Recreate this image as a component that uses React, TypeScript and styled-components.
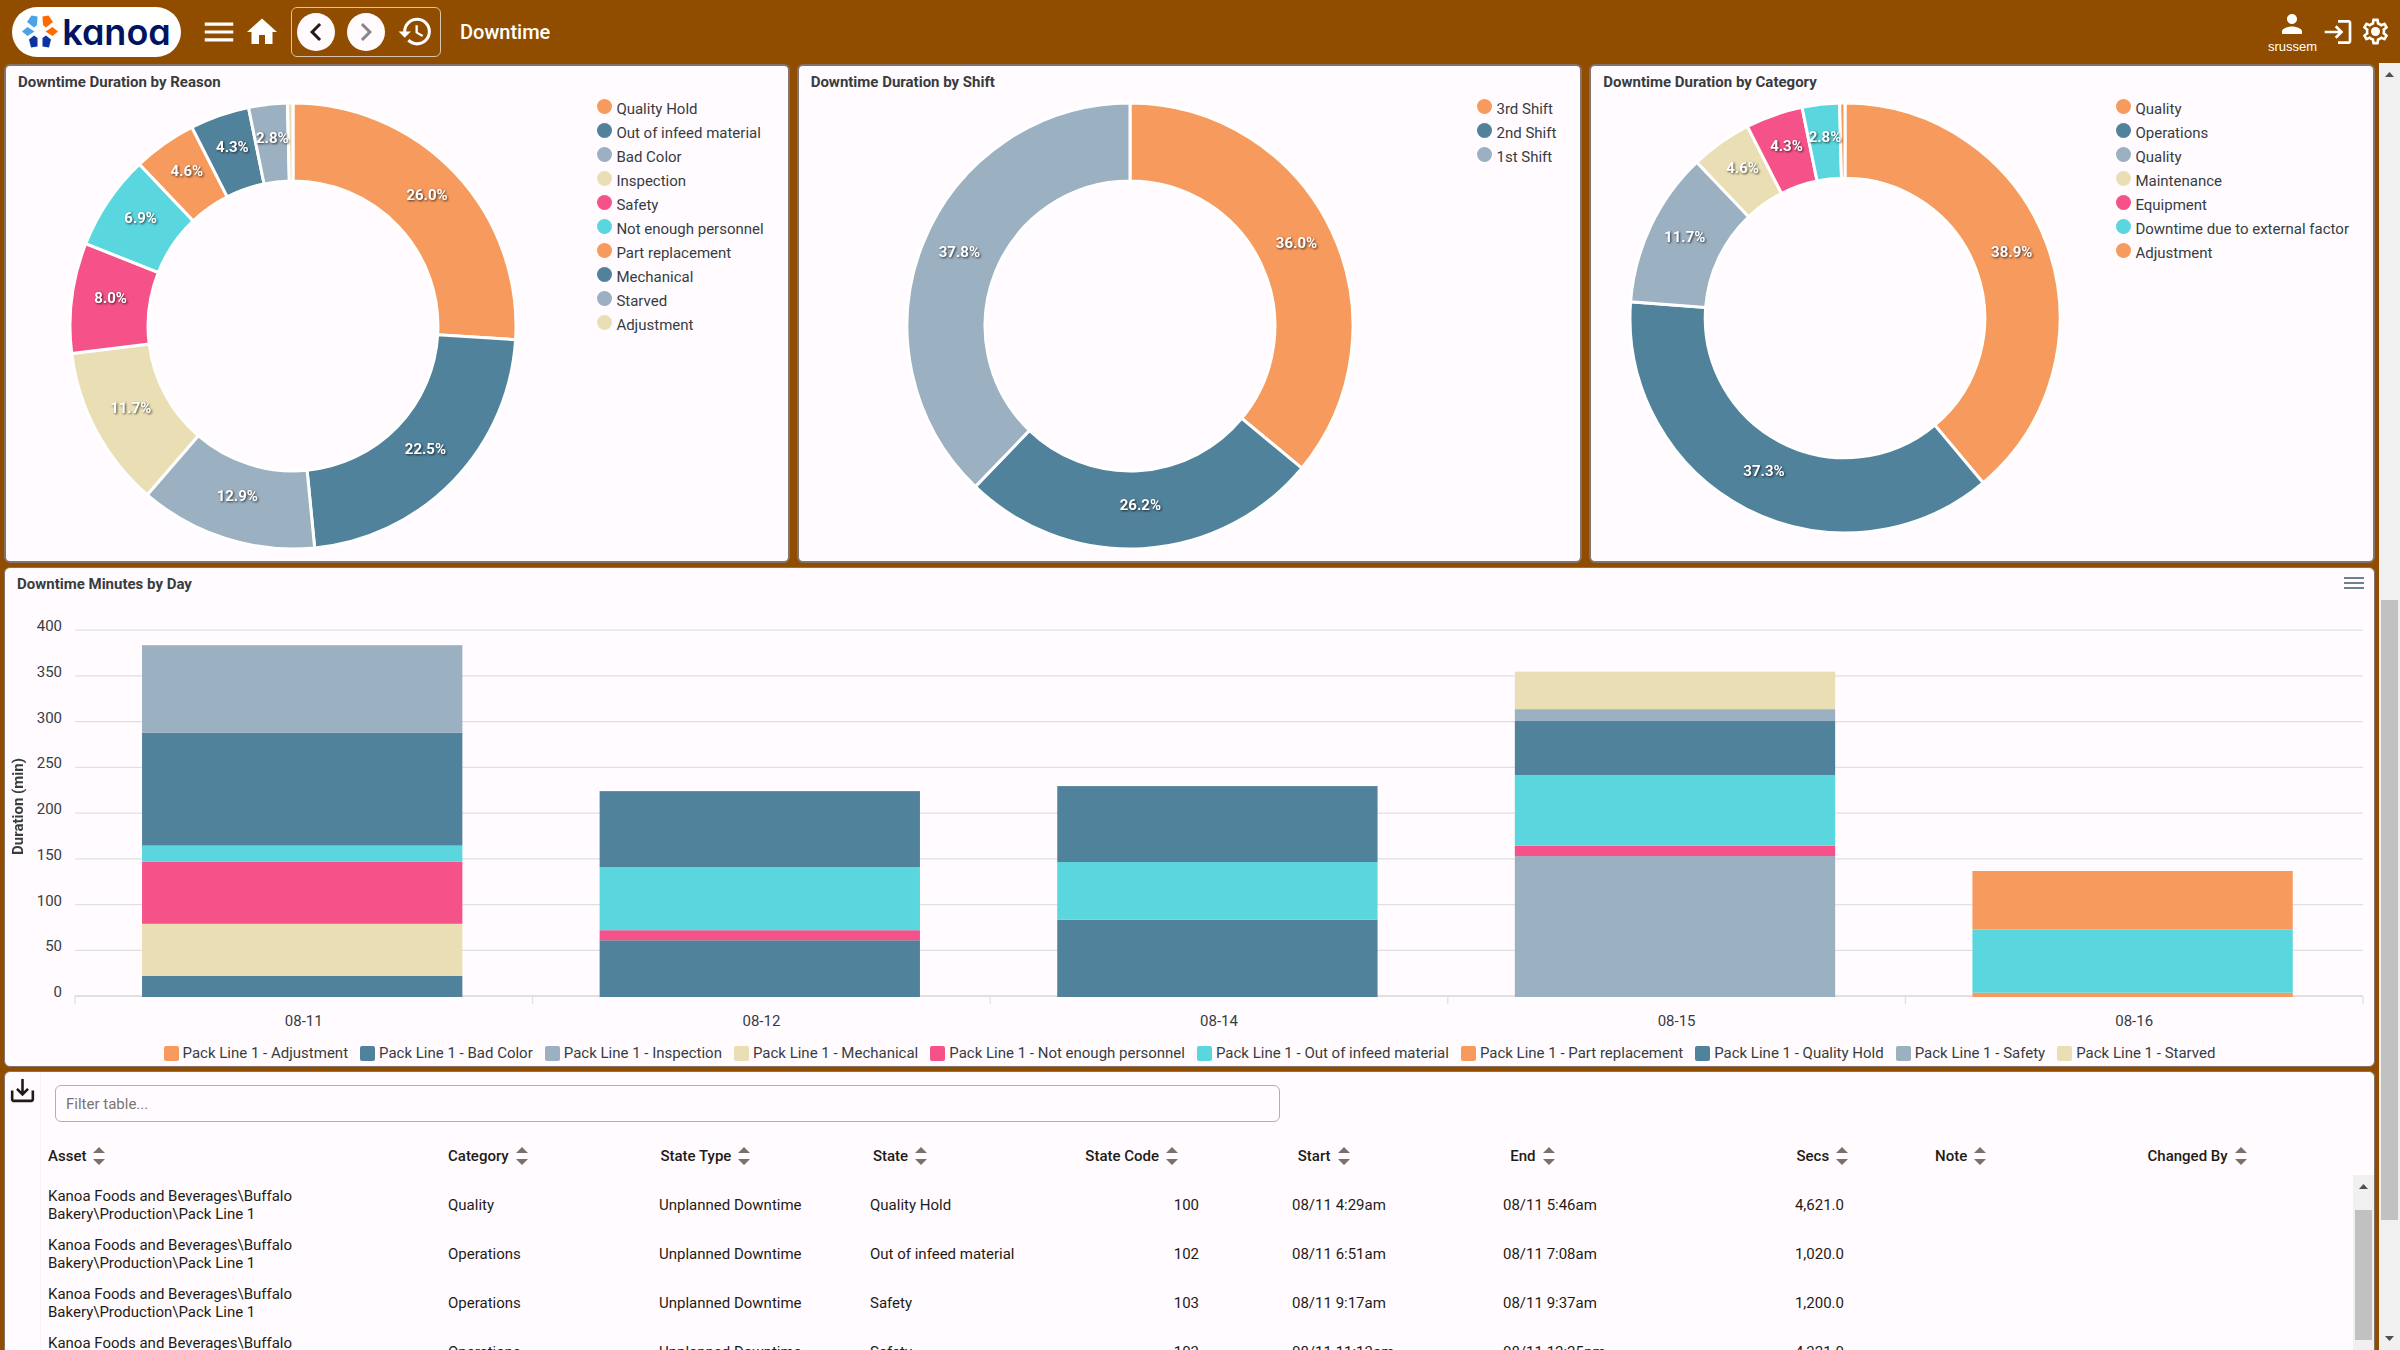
import React from "react";
import styled, { createGlobalStyle } from "styled-components";
import {
  MdChevronLeft,
  MdChevronRight,
  MdHistory,
  MdHome,
  MdLogin,
  MdMenu,
  MdPerson,
  MdSaveAlt,
} from "react-icons/md";

const color = {
  brand: "#904d00",
  surface: "#fffbff",
  outline: "#85736b",
  ink: "#1f1b16",
  chartInk: "#373d3f",
  grid: "#e0e0e0",
  orange: "#f79a5d",
  teal: "#51829b",
  slate: "#9bb0c1",
  sand: "#eadfb4",
  pink: "#f6528a",
  cyan: "#5ad6df",
};

const GlobalStyle = createGlobalStyle`
  *, *::before, *::after { box-sizing: border-box; }
  body {
    margin: 0;
    background: ${color.brand};
    font-family: Roboto, "Liberation Sans", sans-serif;
    font-size: 15px;
    line-height: 20px;
    color: ${color.ink};
  }
  button, input { font: inherit; color: inherit; }
`;

/* ---------- shell ---------- */

const Shell = styled.div`
  display: flex;
  flex-direction: column;
  height: 100vh;
  overflow: hidden;
`;

const TopBar = styled.header`
  flex: none;
  display: flex;
  align-items: center;
  height: 63px;
  padding: 0 9px 0 12px;
  color: #fff;
`;

const Spacer = styled.div`
  flex: 1;
`;

const LogoLink = styled.a`
  display: flex;
  align-items: center;
  justify-content: center;
  gap: 4px;
  width: 169px;
  height: 50px;
  margin-right: 19px;
  border-radius: 25px;
  background: #fff;
  color: #00145f;
  font-family: Inter, sans-serif;
  font-size: 36px;
  font-weight: 600;
  line-height: 48px;
  font-feature-settings: "cv11" 1;
  text-decoration: none;
`;

const IconButton = styled.button<{ $gap?: number }>`
  display: flex;
  flex: none;
  padding: 0;
  margin-right: ${(p) => p.$gap ?? 0}px;
  border: 0;
  background: none;
  cursor: pointer;
`;

const NavGroup = styled.nav`
  display: flex;
  align-items: center;
  gap: 12px;
  height: 50px;
  padding: 0 6px 0 5px;
  border: 1px solid #d8c3b0;
  border-radius: 6px;
`;

const RoundButton = styled(IconButton)<{ $muted?: boolean }>`
  align-items: center;
  justify-content: center;
  width: 38px;
  height: 38px;
  border-radius: 50%;
  background: ${color.surface};
  color: ${(p) => (p.$muted ? "#8a8688" : color.ink)};
`;

const PageTitle = styled.h1`
  margin: 0 0 0 19px;
  font-size: 20px;
  font-weight: 500;
  line-height: 24px;
`;

const User = styled.div`
  display: flex;
  flex-direction: column;
  align-items: center;
  margin-right: 5px;
  font-family: "Liberation Sans", sans-serif;
  font-size: 13px;
  line-height: 16px;
`;

const Body = styled.div`
  display: flex;
  flex: 1;
  min-height: 0;
`;

const Main = styled.main`
  flex: 1;
  min-width: 0;
  display: flex;
  flex-direction: column;
  gap: 4px;
  padding: 1px 4px 4px;
  overflow-y: auto;
  scrollbar-width: none;
`;

/* ---------- scrollbars ---------- */

const Track = styled.div`
  display: flex;
  flex: none;
  flex-direction: column;
  align-items: center;
  width: 21px;
  background: #f0f0f0;
`;

const Arrow = styled.svg`
  flex: none;
  width: 21px;
  height: 24px;
  fill: #505050;
`;

const Stretch = styled.div<{ $grow: number; $thumb?: boolean }>`
  flex: ${(p) => p.$grow} 1 0;
  width: 17px;
  background: ${(p) => (p.$thumb ? "#c1c1c1" : "transparent")};
`;

function Scrollbar({ before, thumb, after }: { before: number; thumb: number; after: number }) {
  return (
    <Track aria-hidden="true">
      <Arrow viewBox="0 0 21 24">
        <path d="M6 14h9l-4.500-5z" />
      </Arrow>
      <Stretch $grow={before} />
      <Stretch $grow={thumb} $thumb />
      <Stretch $grow={after} />
      <Arrow viewBox="0 0 21 24">
        <path d="M6 10h9l-4.500 5z" />
      </Arrow>
    </Track>
  );
}

/* ---------- cards ---------- */

const CardRow = styled.div`
  flex: none;
  display: grid;
  grid-template-columns: repeat(3, minmax(0, 1fr));
  gap: 7px;
`;

const Card = styled.section<{ $border?: number }>`
  flex: none;
  border: ${(p) => p.$border ?? 1}px solid ${color.outline};
  border-radius: 6px;
  background: ${color.surface};
`;

const CardHead = styled.div`
  display: flex;
  align-items: center;
  justify-content: space-between;
  padding: 6px 10px 0 12px;
`;

const CardTitle = styled.h2`
  margin: 0;
  font-size: 15px;
  font-weight: 700;
  line-height: 20px;
  color: ${color.chartInk};
`;

/* ---------- donut charts ---------- */

const DonutBody = styled.div`
  display: flex;
`;

const DonutArea = styled.div`
  flex: 1;
  display: flex;
  justify-content: center;
  padding: 10px 0 11px;
`;

const DonutLabel = styled.text`
  fill: #fff;
  font-size: 15px;
  font-weight: 700;
  text-anchor: middle;
  filter: drop-shadow(1px 1px 1px rgba(0, 0, 0, 0.7));
`;

const SideLegend = styled.ul`
  list-style: none;
  margin: 0 24px 0 17px;
  padding: 5px 0 0;
`;

const LegendItem = styled.li`
  display: flex;
  align-items: center;
  gap: 4px;
  line-height: 24px;
  white-space: nowrap;
  color: ${color.chartInk};
`;

const Marker = styled.span<{ $color: string; $round?: boolean }>`
  width: 15px;
  height: 15px;
  margin-bottom: ${(p) => (p.$round ? 5 : 0)}px;
  border-radius: ${(p) => (p.$round ? "50%" : "2px")};
  background: ${(p) => p.$color};
`;

type Slice = { name: string; value: number; hidden?: boolean };

const palette = [color.orange, color.teal, color.slate, color.sand, color.pink, color.cyan];

function slicePath(c: number, outer: number, inner: number, a0: number, a1: number) {
  const pt = (r: number, a: number) => `${c + r * Math.sin(a)} ${c - r * Math.cos(a)}`;
  const large = a1 - a0 > Math.PI ? 1 : 0;
  return (
    `M${pt(outer, a0)}A${outer} ${outer} 0 ${large} 1 ${pt(outer, a1)}` +
    `L${pt(inner, a1)}A${inner} ${inner} 0 ${large} 0 ${pt(inner, a0)}Z`
  );
}

function DonutCard({ title, slices, size }: { title: string; slices: Slice[]; size: number }) {
  const total = slices.reduce((sum, s) => sum + s.value, 0);
  const c = size / 2;
  const outer = c - 1;
  const inner = outer * 0.65;
  let turned = 0;
  const arcs = slices.map((s, i) => {
    const a0 = (turned / total) * Math.PI * 2;
    turned += s.value;
    const a1 = (turned / total) * Math.PI * 2;
    return { ...s, a0, a1, mid: (a0 + a1) / 2, fill: palette[i % palette.length] };
  });
  const ring = (outer + inner) / 2;
  return (
    <Card $border={2}>
      <CardHead>
        <CardTitle>{title}</CardTitle>
      </CardHead>
      <DonutBody>
        <DonutArea>
          <svg width={size} height={size} role="img" aria-label={title}>
            {arcs.map((a) => (
              <path
                key={a.name + a.a0}
                d={slicePath(c, outer, inner, a.a0, a.a1)}
                fill={a.fill}
                stroke="#fff"
                strokeWidth={3}
              />
            ))}
            {arcs
              .filter((a) => !a.hidden)
              .map((a) => (
                <DonutLabel
                  key={a.name + a.a0}
                  x={c + ring * Math.sin(a.mid)}
                  y={c - ring * Math.cos(a.mid)}
                >
                  {a.value.toFixed(1)}%
                </DonutLabel>
              ))}
          </svg>
        </DonutArea>
        <SideLegend>
          {arcs.map((a) => (
            <LegendItem key={a.name + a.a0}>
              <Marker $color={a.fill} $round />
              {a.name}
            </LegendItem>
          ))}
        </SideLegend>
      </DonutBody>
    </Card>
  );
}

const byReason: Slice[] = [
  { name: "Quality Hold", value: 26.0 },
  { name: "Out of infeed material", value: 22.5 },
  { name: "Bad Color", value: 12.9 },
  { name: "Inspection", value: 11.7 },
  { name: "Safety", value: 8.0 },
  { name: "Not enough personnel", value: 6.9 },
  { name: "Part replacement", value: 4.6 },
  { name: "Mechanical", value: 4.3 },
  { name: "Starved", value: 2.8 },
  { name: "Adjustment", value: 0.4, hidden: true },
];

const byShift: Slice[] = [
  { name: "3rd Shift", value: 36.0 },
  { name: "2nd Shift", value: 26.2 },
  { name: "1st Shift", value: 37.8 },
];

const byCategory: Slice[] = [
  { name: "Quality", value: 38.9 },
  { name: "Operations", value: 37.3 },
  { name: "Quality", value: 11.7 },
  { name: "Maintenance", value: 4.6 },
  { name: "Equipment", value: 4.3 },
  { name: "Downtime due to external factor", value: 2.8 },
  { name: "Adjustment", value: 0.4, hidden: true },
];

/* ---------- stacked bar chart ---------- */

const PlotRow = styled.div`
  display: grid;
  grid-template-columns: 26px 31px 1fr;
  padding: 36px 11px 0 0;
`;

const AxisTitle = styled.div`
  display: flex;
  align-items: center;
  justify-content: center;
  writing-mode: vertical-rl;
  transform: rotate(180deg);
  padding-top: 12px;
  font-weight: 700;
  line-height: 26px;
  color: ${color.chartInk};
`;

const YLabels = styled.div`
  display: flex;
  flex-direction: column;
  justify-content: space-between;
  margin: -14px 0 -6px;
  text-align: right;
  color: ${color.chartInk};
`;

const Plot = styled.svg`
  display: block;
  width: calc(100% - 13px);
  height: 366px;
  margin-left: 13px;
  overflow: visible;
`;

const XLabels = styled.div`
  display: grid;
  grid-template-columns: repeat(5, 1fr);
  margin: 15px 11px 0 70px;
  text-align: center;
  color: ${color.chartInk};
`;

const BottomLegend = styled.ul`
  list-style: none;
  display: flex;
  flex-wrap: wrap;
  justify-content: center;
  gap: 0 12px;
  margin: 0;
  padding: 10px 12px 1px;
`;

type Segment = [fill: string, minutes: number];

const days: { label: string; stack: Segment[] }[] = [
  {
    label: "08-11",
    stack: [
      [color.teal, 23],
      [color.sand, 57],
      [color.pink, 68],
      [color.cyan, 17.5],
      [color.teal, 123.5],
      [color.slate, 95.5],
    ],
  },
  {
    label: "08-12",
    stack: [
      [color.teal, 62],
      [color.pink, 11],
      [color.cyan, 69],
      [color.teal, 83],
    ],
  },
  {
    label: "08-14",
    stack: [
      [color.teal, 84.5],
      [color.cyan, 63],
      [color.teal, 83],
    ],
  },
  {
    label: "08-15",
    stack: [
      [color.slate, 154],
      [color.pink, 11.3],
      [color.cyan, 77.3],
      [color.teal, 59],
      [color.slate, 13],
      [color.sand, 41],
    ],
  },
  {
    label: "08-16",
    stack: [
      [color.orange, 4.7],
      [color.cyan, 69],
      [color.orange, 64],
    ],
  },
];

const series = [
  "Adjustment",
  "Bad Color",
  "Inspection",
  "Mechanical",
  "Not enough personnel",
  "Out of infeed material",
  "Part replacement",
  "Quality Hold",
  "Safety",
  "Starved",
];
const seriesColors = [
  color.orange,
  color.teal,
  color.slate,
  color.sand,
  color.pink,
  color.cyan,
  color.orange,
  color.teal,
  color.slate,
  color.sand,
];

const PLOT_HEIGHT = 366;
const Y_MAX = 400;
const ticks = [400, 350, 300, 250, 200, 150, 100, 50, 0];

function DayChart() {
  const px = (minutes: number) => (minutes / Y_MAX) * PLOT_HEIGHT;
  return (
    <Card>
      <CardHead>
        <CardTitle>Downtime Minutes by Day</CardTitle>
        <IconButton aria-label="Chart menu">
          <svg width="20" height="14" stroke="#6e8192" strokeWidth="2">
            <path d="M0 1h20M0 6h20M0 11h20" />
          </svg>
        </IconButton>
      </CardHead>
      <PlotRow>
        <AxisTitle>Duration (min)</AxisTitle>
        <YLabels>
          {ticks.map((t) => (
            <span key={t}>{t}</span>
          ))}
        </YLabels>
        <Plot role="img" aria-label="Downtime minutes by day">
          {ticks.map((t) => (
            <line
              key={t}
              x1="0"
              x2="100%"
              y1={px(Y_MAX - t)}
              y2={px(Y_MAX - t)}
              stroke={color.grid}
              strokeWidth={t === 0 ? 2 : 1.25}
            />
          ))}
          {[0, 1, 2, 3, 4, 5].map((i) => (
            <line
              key={i}
              x1={`${i * 20}%`}
              x2={`${i * 20}%`}
              y1={PLOT_HEIGHT}
              y2={PLOT_HEIGHT + 8}
              stroke={color.grid}
              strokeWidth={1.25}
            />
          ))}
          {days.map((day, i) => {
            let base = PLOT_HEIGHT + 1;
            return day.stack.map(([fill, minutes], k) => {
              const h = px(minutes);
              base -= h;
              return (
                <rect
                  key={day.label + k}
                  x={`${i * 20 + 2.93}%`}
                  y={base}
                  width="14%"
                  height={h}
                  fill={fill}
                />
              );
            });
          })}
        </Plot>
      </PlotRow>
      <XLabels>
        {days.map((d) => (
          <span key={d.label}>{d.label}</span>
        ))}
      </XLabels>
      <BottomLegend>
        {series.map((name, i) => (
          <LegendItem key={name}>
            <Marker $color={seriesColors[i]} />
            Pack Line 1 - {name}
          </LegendItem>
        ))}
      </BottomLegend>
    </Card>
  );
}

/* ---------- table ---------- */

const TableCard = styled(Card)`
  display: grid;
  grid-template-columns: 36px minmax(0, 1fr);
`;

const Rail = styled.div`
  display: flex;
  align-items: flex-start;
  justify-content: center;
  padding-top: 3px;
  border-right: 1px solid #f7f2f7;
`;

const FilterInput = styled.input`
  display: block;
  width: 52.5%;
  height: 37px;
  margin: 13px 0 14px 14px;
  padding: 0 10px;
  border: 1px solid #b5adb0;
  border-radius: 6px;
  background: transparent;
  &::placeholder {
    color: #7c7570;
    opacity: 1;
  }
`;

const TableFrame = styled.div`
  display: grid;
  grid-template-columns: minmax(0, 1fr) 21px;
  grid-template-rows: 39px auto;
`;

const Table = styled.table`
  grid-row: 1 / 3;
  display: block;
`;

const THead = styled.thead`
  display: block;
`;

const TBody = styled.tbody`
  display: block;
  min-height: 250px;
  padding: 5px 13px 0 0;
`;

const Tr = styled.tr<{ $height: number }>`
  display: grid;
  grid-template-columns: 400px repeat(9, minmax(0, 1fr));
  align-items: center;
  min-height: ${(p) => p.$height}px;
`;

const Th = styled.th<{ $end?: boolean }>`
  display: flex;
  justify-content: ${(p) => (p.$end ? "flex-end" : "flex-start")};
  padding: 0 ${(p) => (p.$end ? 80 : 7)}px 0 7px;
  font-weight: 500;
`;

const SortButton = styled.button`
  display: flex;
  align-items: center;
  gap: 7px;
  padding: 0;
  border: 0;
  background: none;
  cursor: pointer;
`;

const Td = styled.td<{ $inset?: number }>`
  padding: 0 ${(p) => p.$inset ?? 7}px 0 7px;
  line-height: 18px;
  text-align: ${(p) => (p.$inset ? "right" : "left")};
`;

const ScrollCell = styled.div`
  grid-row: 2;
  grid-column: 2;
  display: flex;
`;

const columns = [
  "Asset",
  "Category",
  "State Type",
  "State",
  "State Code",
  "Start",
  "End",
  "Secs",
  "Note",
  "Changed By",
];

const asset = "Kanoa Foods and Beverages\\Buffalo Bakery\\Production\\Pack Line 1";
const insets: Record<number, number> = { 4: 86, 7: 74 };
const rows = [
  [asset, "Quality", "Unplanned Downtime", "Quality Hold", "100", "08/11 4:29am", "08/11 5:46am", "4,621.0", "", ""],
  [asset, "Operations", "Unplanned Downtime", "Out of infeed material", "102", "08/11 6:51am", "08/11 7:08am", "1,020.0", "", ""],
  [asset, "Operations", "Unplanned Downtime", "Safety", "103", "08/11 9:17am", "08/11 9:37am", "1,200.0", "", ""],
  [asset, "Operations", "Unplanned Downtime", "Safety", "103", "08/11 11:13am", "08/11 12:25pm", "4,321.0", "", ""],
];

function EventTable() {
  return (
    <TableCard>
      <Rail>
        <IconButton aria-label="Download">
          <MdSaveAlt size={31} />
        </IconButton>
      </Rail>
      <div>
        <FilterInput type="text" placeholder="Filter table..." aria-label="Filter table" />
        <TableFrame>
          <Table>
            <THead>
              <Tr $height={39}>
                {columns.map((name) => (
                  <Th key={name} scope="col" $end={name === "Secs"}>
                    <SortButton>
                      {name}
                      <svg width="12" height="20" fill="#7d7068" aria-hidden="true">
                        <path d="M0 7h12L6 1zM0 13h12l-6 6z" />
                      </svg>
                    </SortButton>
                  </Th>
                ))}
              </Tr>
            </THead>
            <TBody>
              {rows.map((row, r) => (
                <Tr key={r} $height={49}>
                  {row.map((cell, i) => (
                    <Td key={i} $inset={insets[i]}>
                      {cell}
                    </Td>
                  ))}
                </Tr>
              ))}
            </TBody>
          </Table>
          <ScrollCell>
            <Scrollbar before={11} thumb={130} after={61} />
          </ScrollCell>
        </TableFrame>
      </div>
    </TableCard>
  );
}

/* ---------- brand and settings drawings ---------- */

function Emblem() {
  return (
    <svg width="36" height="33" viewBox="0 0 36 33" aria-hidden="true">
      <path d="M9.500 0.500 15.500 1.500 15 10 12 12.500 5 7z" fill="#4aa3e8" />
      <path d="M0 16.500 5.500 12 12.500 16.500 5.500 21z" fill="#4aa3e8" />
      <path d="M26.500 0.500 20.500 1.500 21 10 24 12.500 31 7z" fill="#ff6a00" />
      <path d="M36 16.500 30.500 12 23.500 16.500 30.500 21z" fill="#ff6a00" />
      <path d="M9 32.500 15.500 31.500 15.500 23 12 20.500 7 24.500z" fill="#0a35a0" />
      <path d="M27 32.500 20.500 31.500 20.500 23 24 20.500 29 24.500z" fill="#0a35a0" />
    </svg>
  );
}

function GearIcon() {
  return (
    <svg width="31" height="31" viewBox="0 0 24 24" fill="currentColor" aria-hidden="true">
      <path d="M19.43 12.98c.04-.32.07-.64.07-.98 0-.34-.03-.66-.07-.98l2.11-1.65c.19-.15.24-.42.12-.64l-2-3.46c-.09-.16-.26-.25-.44-.25-.06 0-.12.01-.17.03l-2.490 1c-.52-.4-1.080-.73-1.690-.98l-.38-2.650C14.460 2.180 14.250 2 14 2h-4c-.25 0-.46.18-.49.42l-.38 2.650c-.61.25-1.170.59-1.690.98l-2.490-1c-.06-.02-.12-.03-.18-.03-.17 0-.34.09-.43.25l-2 3.460c-.13.22-.07.49.12.64l2.110 1.650c-.04.32-.07.65-.07.98 0 .33.03.66.07.98l-2.110 1.650c-.19.15-.24.42-.12.64l2 3.460c.09.16.26.25.44.25.06 0 .12-.01.17-.03l2.490-1c.52.4 1.080.73 1.690.98l.38 2.650c.03.24.24.42.49.42h4c.25 0 .46-.18.49-.42l.38-2.650c.61-.25 1.170-.59 1.690-.98l2.490 1c.06.02.12.03.18.03.17 0 .34-.09.43-.25l2-3.460c.12-.22.07-.49-.12-.64l-2.110-1.650zm-1.980-1.710c.04.31.05.52.05.73 0 .21-.02.43-.05.73l-.14 1.130.89.7 1.080.84-.7 1.210-1.270-.51-1.040-.42-.9.68c-.43.32-.84.56-1.250.73l-1.060.43-.16 1.130-.2 1.350h-1.400l-.19-1.350-.16-1.130-1.060-.43c-.43-.18-.83-.41-1.230-.71l-.91-.7-1.060.43-1.270.51-.7-1.210 1.080-.84.89-.7-.14-1.130c-.03-.31-.05-.54-.05-.74s.02-.43.05-.73l.14-1.130-.89-.7-1.080-.84.7-1.210 1.270.51 1.040.42.9-.68c.43-.32.84-.56 1.250-.73l1.060-.43.16-1.130.2-1.350h1.390l.19 1.350.16 1.130 1.060.43c.43.18.83.41 1.230.71l.91.7 1.060-.43 1.270-.51.7 1.210-1.070.85-.89.7.14 1.130z" />
      <circle cx="12" cy="12" r="3.500" />
    </svg>
  );
}

export default function App() {
  return (
    <Shell>
      <GlobalStyle />
      <TopBar>
        <LogoLink href="#">
          <Emblem />
          kanoa
        </LogoLink>
        <IconButton aria-label="Menu" $gap={6}>
          <MdMenu size={38} />
        </IconButton>
        <IconButton aria-label="Home" $gap={11}>
          <MdHome size={36} />
        </IconButton>
        <NavGroup aria-label="History">
          <RoundButton aria-label="Back">
            <MdChevronLeft size={36} />
          </RoundButton>
          <RoundButton aria-label="Forward" $muted>
            <MdChevronRight size={36} />
          </RoundButton>
          <IconButton aria-label="Recent pages">
            <MdHistory size={37} />
          </IconButton>
        </NavGroup>
        <PageTitle>Downtime</PageTitle>
        <Spacer />
        <User>
          <MdPerson size={30} />
          srussem
        </User>
        <IconButton aria-label="Log in" $gap={6}>
          <MdLogin size={32} />
        </IconButton>
        <IconButton aria-label="Settings">
          <GearIcon />
        </IconButton>
      </TopBar>
      <Body>
        <Main>
          <CardRow>
            <DonutCard title="Downtime Duration by Reason" slices={byReason} size={448} />
            <DonutCard title="Downtime Duration by Shift" slices={byShift} size={448} />
            <DonutCard title="Downtime Duration by Category" slices={byCategory} size={432} />
          </CardRow>
          <DayChart />
          <EventTable />
        </Main>
        <Scrollbar before={513} thumb={620} after={106} />
      </Body>
    </Shell>
  );
}
